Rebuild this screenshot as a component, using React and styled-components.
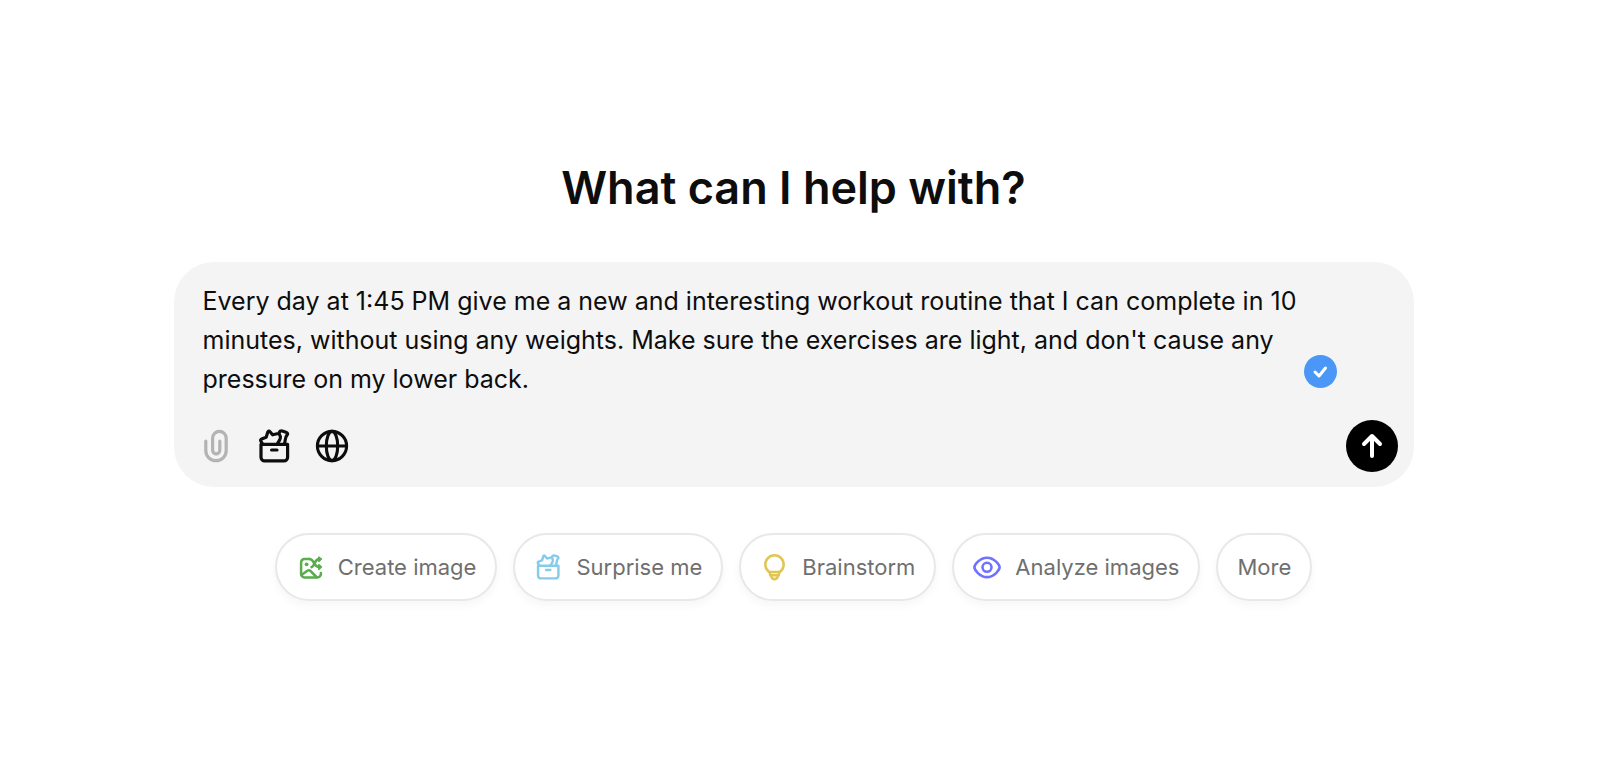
import { useState } from "react";
import styled, { createGlobalStyle } from "styled-components";

const GlobalStyle = createGlobalStyle`
  * {
    box-sizing: border-box;
  }
  body {
    margin: 0;
    background-color: #ffffff;
    font-family: Inter, "Liberation Sans", sans-serif;
  }
  button,
  textarea {
    font-family: inherit;
  }
`;

const Container = styled.main`
  min-height: 100vh;
  padding: 0 30px 3px 17px;
  display: flex;
  flex-direction: column;
  align-items: center;
  justify-content: center;
`;

const Title = styled.h1`
  margin: 0 0 42px;
  font-size: 45px;
  line-height: 64px;
  font-weight: 600;
  color: #0d0d0d;
`;

const Composer = styled.form`
  position: relative;
  width: 100%;
  max-width: 1240px;
  padding: 20px 16px 15px 25px;
  border-radius: 40px;
  background-color: #f4f4f4;
`;

const Prompt = styled.textarea`
  display: block;
  width: calc(100% - 50px);
  height: 117px;
  margin: 0 0 21px;
  padding: 0 0 0 4px;
  border: none;
  outline: none;
  resize: none;
  overflow: hidden;
  background: transparent;
  font-size: 25px;
  line-height: 39px;
  color: #0d0d0d;
`;

const Toolbar = styled.div`
  display: flex;
  align-items: center;
  gap: 24px;
`;

const IconButton = styled.button`
  display: flex;
  padding: 0;
  border: none;
  background: transparent;
  color: ${(props) => (props.$muted ? "#b3b3b3" : "#0d0d0d")};
  cursor: pointer;
`;

const SendButton = styled.button`
  display: flex;
  align-items: center;
  justify-content: center;
  width: 52px;
  height: 52px;
  margin-left: auto;
  padding: 0;
  border: none;
  border-radius: 50%;
  background-color: #000000;
  color: #ffffff;
  cursor: pointer;
`;

// Floats over the text, like a writing assistant's status mark
const CheckBadge = styled.button`
  position: absolute;
  right: 77px;
  bottom: 99px;
  display: flex;
  align-items: center;
  justify-content: center;
  width: 33px;
  height: 33px;
  padding: 0;
  border: none;
  border-radius: 50%;
  background-color: #4b97f8;
  color: #ffffff;
  cursor: pointer;
`;

const Suggestions = styled.div`
  display: flex;
  flex-wrap: wrap;
  justify-content: center;
  gap: 16px;
  margin-top: 46px;
`;

const Chip = styled.button`
  display: flex;
  align-items: center;
  gap: 14px;
  height: 68px;
  padding: 0 19px;
  border: 2px solid #e8e8e8;
  border-radius: 34px;
  background-color: #ffffff;
  box-shadow: 0 4px 10px rgba(0, 0, 0, 0.04);
  font-size: 22px;
  color: #6f6f6f;
  cursor: pointer;
`;

const ChipIcon = styled.span`
  display: flex;
  justify-content: center;
  width: 28px;
  color: ${(props) => props.$accent};
`;

const Svg = ({ children, size = 28, stroke = 2.5, box = 28 }) => (
  <svg
    width={size}
    height={size}
    viewBox={`0 0 ${box} ${box}`}
    fill="none"
    stroke="currentColor"
    strokeWidth={stroke}
    strokeLinecap="round"
    strokeLinejoin="round"
    aria-hidden="true"
  >
    {children}
  </svg>
);

const ClipIcon = () => (
  <Svg size={34} box={34} stroke={3.2}>
    <path d="M6.8 12 V21.7 a10.2 10 0 0 0 20.4 0 V9.2 a6.8 6.8 0 0 0 -13.6 0 V21.3 a3.6 3.6 0 0 0 7.2 0 V12" />
  </Svg>
);

const BoxIcon = ({ size = 34 }) => (
  <Svg size={size} box={34} stroke={3.2}>
    <path d="M4 15.3 H30.6 V28.3 A3.6 3.6 0 0 1 27 31.9 H7.6 A3.6 3.6 0 0 1 4 28.3 Z" />
    <path d="M14.6 21 H20" />
    <path d="M5.4 14.8 L3.8 12 Q3.2 10.5 4.6 10 L9.2 8.2 L10.8 3 Q11.8 1.2 13 2.7 L15.6 5.8 L20.2 4.8" />
    <path d="M20.4 14.6 C22.6 11.6 24.2 9.4 23.2 7.2 C22.4 5.4 21.8 4.6 22.4 3.2 C23 1.8 24.4 1.8 26 2.2 L29 3.2 C30.8 3.8 31 5 30 6.2 C27.6 8.8 28.8 11.4 27.4 14.6" />
  </Svg>
);

const GlobeIcon = () => (
  <Svg size={34} box={34} stroke={3.1}>
    <circle cx="17" cy="17" r="14.6" />
    <ellipse cx="17" cy="17" rx="5.7" ry="14.6" />
    <path d="M2.5 17 H31.5" />
  </Svg>
);

const ArrowIcon = () => (
  <Svg stroke={4}>
    <path d="M14 24 V4 M6 12 L14 4 L22 12" />
  </Svg>
);

const CheckIcon = () => (
  <Svg size={17} box={17} stroke={3}>
    <path d="M3 9 L7 13 L13.5 5" />
  </Svg>
);

const ImageIcon = () => (
  <Svg>
    <path d="M13.5 6 H8.5 A3.4 3.4 0 0 0 5.1 9.4 V21 A3.4 3.4 0 0 0 8.5 24.4 H21.5 A3.4 3.4 0 0 0 24.9 21 V20" />
    <path d="M5.5 22 L11.3 17.8 Q13 16.7 14.5 18 L20.5 24" />
    <circle cx="10.6" cy="11.3" r="1.9" fill="currentColor" stroke="none" />
    <path d="M13.5 6 C18.5 6 17.5 14 23 14 M15.5 14.2 C19 13 18.5 6 23 6" />
    <path d="M22.8 4 L25.5 6 L22.8 8.6 Z M22.8 11.6 L25.5 14 L22.8 16.5 Z" fill="currentColor" strokeWidth="1.4" />
  </Svg>
);

const BulbIcon = () => (
  <Svg>
    <path d="M9.1 18.9 A9.2 9.2 0 1 1 19.9 18.9 Z" />
    <path d="M9.6 18.9 L10.3 22.3 H18.7 L19.4 18.9" />
    <path d="M10.8 22.3 C12 27.6 17 27.6 18.2 22.3" />
  </Svg>
);

const EyeIcon = () => (
  <Svg stroke={2.6}>
    <path d="M1.4 14.3 C1.4 12 6.5 4.7 14 4.7 S26.6 12 26.6 14.3 S21.5 24.1 14 24.1 S1.4 16.6 1.4 14.3 Z" />
    <circle cx="14" cy="14.3" r="4.5" />
  </Svg>
);

const suggestions = [
  { label: "Create image", accent: "#5aac4c", icon: <ImageIcon /> },
  { label: "Surprise me", accent: "#85cbeb", icon: <BoxIcon size={26} /> },
  { label: "Brainstorm", accent: "#dfc655", icon: <BulbIcon /> },
  { label: "Analyze images", accent: "#7072ff", icon: <EyeIcon /> },
  { label: "More" },
];

const App = () => {
  const [prompt, setPrompt] = useState(
    "Every day at 1:45 PM give me a new and interesting workout routine that I can complete in 10 minutes, without using any weights. Make sure the exercises are light, and don't cause any pressure on my lower back."
  );

  return (
    <Container>
      <GlobalStyle />
      <Title>What can I help with?</Title>
      <Composer onSubmit={(e) => e.preventDefault()}>
        <Prompt
          aria-label="Message"
          spellCheck={false}
          value={prompt}
          onChange={(e) => setPrompt(e.target.value)}
        />
        <Toolbar>
          <IconButton type="button" $muted aria-label="Attach files">
            <ClipIcon />
          </IconButton>
          <IconButton type="button" aria-label="Tools">
            <BoxIcon />
          </IconButton>
          <IconButton type="button" aria-label="Search the web">
            <GlobeIcon />
          </IconButton>
          <SendButton type="submit" aria-label="Send">
            <ArrowIcon />
          </SendButton>
        </Toolbar>
        <CheckBadge type="button" aria-label="No writing issues">
          <CheckIcon />
        </CheckBadge>
      </Composer>
      <Suggestions>
        {suggestions.map((item) => (
          <Chip key={item.label} type="button">
            {item.icon && <ChipIcon $accent={item.accent}>{item.icon}</ChipIcon>}
            {item.label}
          </Chip>
        ))}
      </Suggestions>
    </Container>
  );
};

export default App;
